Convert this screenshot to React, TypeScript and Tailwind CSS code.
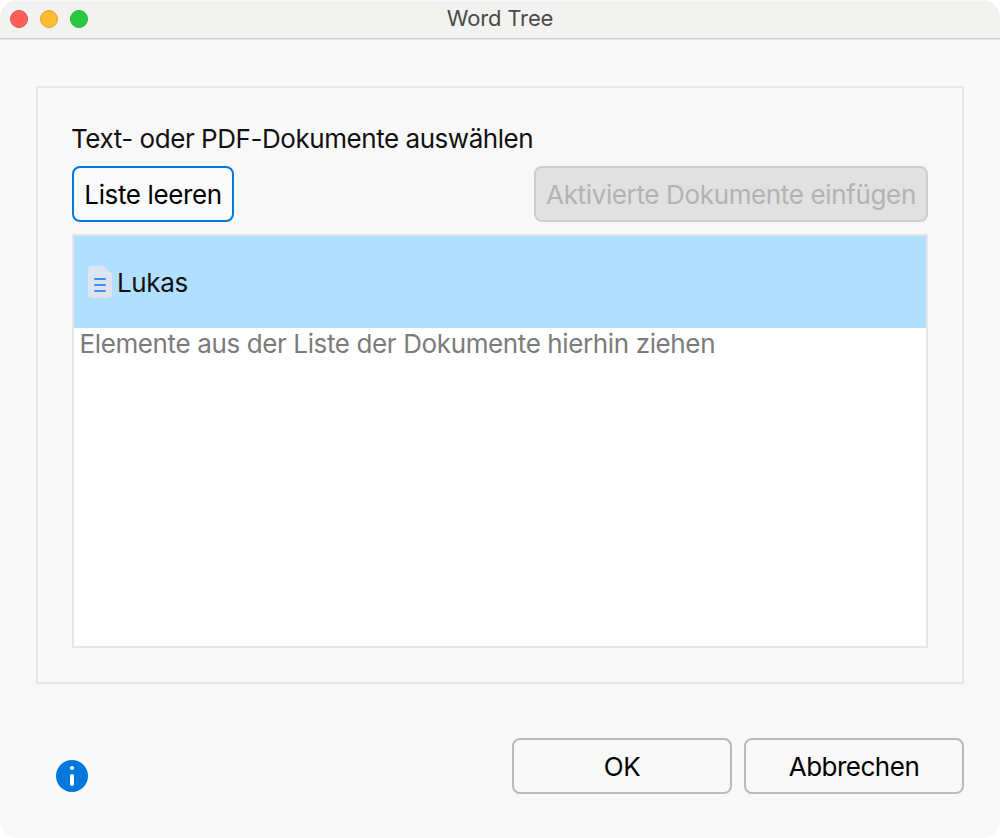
const dots = ["bg-[#ff5f57] border-[#e9504a]", "bg-[#febc2e] border-[#e5a322]", "bg-[#28c840] border-[#20b436]"];

function DocIcon() {
  return (
    <svg width="24" height="32" viewBox="0 0 24 32">
      <path d="M4 0h12l8 8v20a4 4 0 0 1-4 4H4a4 4 0 0 1-4-4V4a4 4 0 0 1 4-4z" fill="#dde4f0" />
      <path d="M7 13h10M7 19h10M7 25h10" stroke="#3b8ff5" strokeWidth="2" strokeLinecap="round" />
    </svg>
  );
}

export default function App() {
  return (
    <div className="h-[838px] w-[1000px] bg-white font-['Inter',sans-serif] text-[#111]">
      <div className="flex h-full flex-col overflow-hidden rounded-[18px] bg-[#f8f8f8]">
        <header className="grid h-10 shrink-0 grid-cols-3 items-center border-t border-b border-t-[#f9f9f9] border-b-[#e6e6e6] bg-[#f2f2f0] shadow-[inset_0_-1px_0_#cfcfcf]">
          <div className="flex gap-3 pl-2.5">
            {dots.map((d) => <span key={d} className={`-mt-0.5 size-[18px] rounded-full border ${d}`} />)}
          </div>
          <h1 className="-mt-1 text-center text-[22px] leading-[32px] tracking-[-0.15px] text-[#4b4b4b]">Word Tree</h1>
        </header>

        <main className="mx-9 mt-[46px] h-[598px] border-2 border-[#e6e6e6] px-[34px] pt-[35px]">
          <p className="-ml-px h-[43px] text-[26px] leading-[32px] tracking-[-0.45px]">Text- oder PDF-Dokumente auswählen</p>
          <div className="flex justify-between">
            <button type="button" className="h-14 w-[162px] rounded-lg border-2 border-[#0079dc] bg-[#fafafa] text-[26px] tracking-[-0.38px] whitespace-nowrap text-black">Liste leeren</button>
            <button type="button" disabled className="h-14 w-[394px] rounded-lg border-2 border-[#cdcdcd] bg-[#e1e1e1] text-[26px] tracking-[-0.36px] whitespace-nowrap text-[#b3b3b3]">Aktivierte Dokumente einfügen</button>
          </div>
          <div className="mt-3 h-[414px] border-2 border-[#e6e6e6] bg-white text-[26px] tracking-[-0.38px]">
            <div className="flex h-[92px] items-center gap-[5px] bg-[#b0dfff] pl-3.5">
              <DocIcon />
              <span>Lukas</span>
            </div>
            <p className="pl-[5.5px] leading-[32px] text-[#7b7b7b]">Elemente aus der Liste der Dokumente hierhin ziehen</p>
          </div>
        </main>

        <footer className="mt-[54px] flex h-14 items-start justify-between pr-9 pl-14">
          <svg className="mt-[22px]" width="32" height="32" viewBox="0 0 32 32">
            <circle cx="16" cy="16" r="16" fill="#0079dc" />
            <circle cx="16" cy="8" r="2.1" fill="#fff" />
            <path d="M16 16v8" stroke="#fff" strokeWidth="4" strokeLinecap="round" />
          </svg>
          <div className="flex gap-3">
            <button type="button" className="h-14 w-[220px] rounded-lg border-2 border-[#bababa] text-[26px] tracking-[-0.5px] text-black">OK</button>
            <button type="button" className="h-14 w-[220px] rounded-lg border-2 border-[#bababa] text-[26px] tracking-[-0.5px] text-black">Abbrechen</button>
          </div>
        </footer>
      </div>
    </div>
  );
}
